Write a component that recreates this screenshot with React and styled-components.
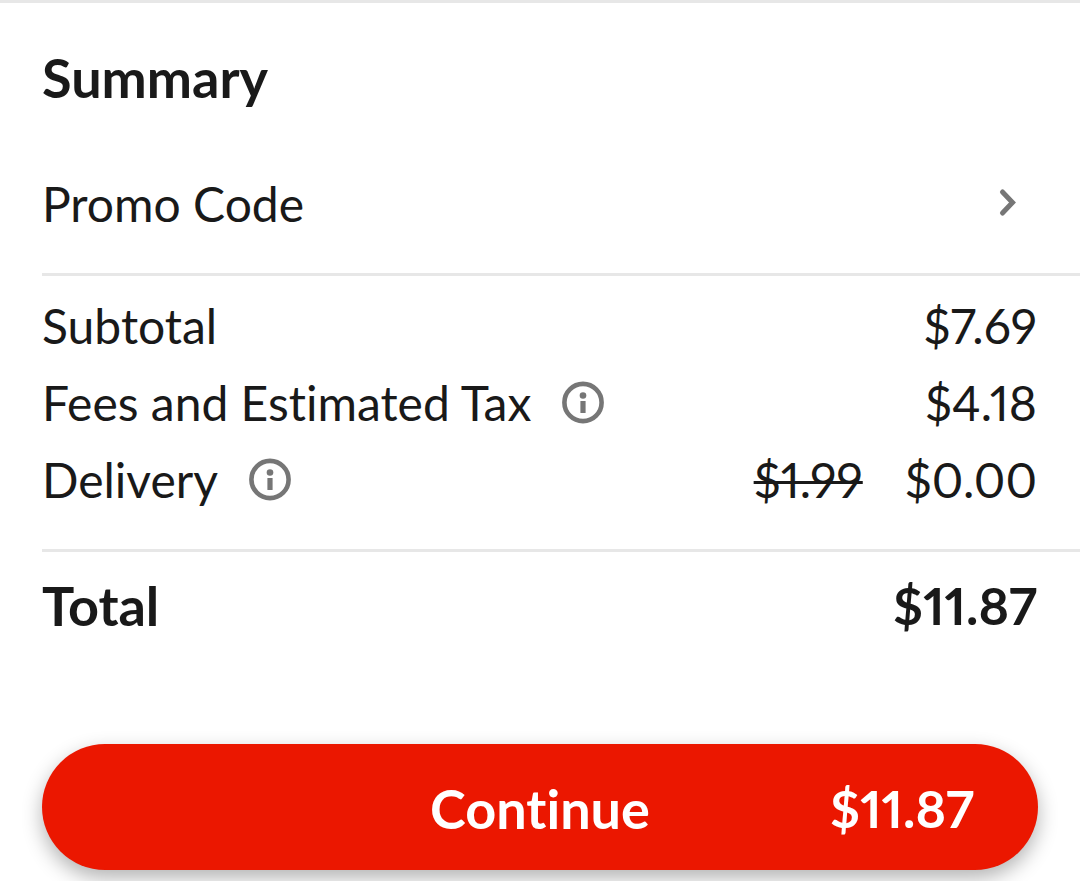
import React from 'react';
import { styled, createGlobalStyle } from 'styled-components';

const GlobalStyle = createGlobalStyle`
    * {
        box-sizing : border-box;
    }

    body {
        margin : 0;
        background-color : #ffffff;
        color : #191919;
        font-family : Lato, "Open Sans", sans-serif;
        font-size : 48px;
        font-weight : 400;
        font-variant-ligatures : none;
        font-variant-numeric : proportional-nums;
    }
`

const Page = styled.main`
    border-top : 3px solid #e7e7e7;
    overflow : hidden;
`

const Title = styled.h1`
    margin : 0;
    padding : 43px 42px 41px;
    font-size : 54px;
    font-weight : 700;
    line-height : 64px;
`

const PromoButton = styled.button`
    display : flex;
    width : 100%;
    justify-content : space-between;
    align-items : center;
    padding : 16px 62px 32px 42px;
    border : none;
    background : none;
    color : inherit;
    font : inherit;
    line-height : 74px;
    cursor : pointer;
`

const Section = styled.section`
    margin-left : 42px;
    padding : ${({ $padding }) => $padding};
    border-top : 3px solid #e7e7e7;
`

const Row = styled.div`
    display : flex;
    justify-content : space-between;
    align-items : center;
    font-size : ${({ $strong }) => ($strong ? '54px' : 'inherit')};
    font-weight : ${({ $strong }) => ($strong ? 700 : 400)};
    line-height : 77px;
`

const Label = styled.div`
    display : flex;
    align-items : center;
    gap : 30px;
`

const Amounts = styled.div`
    display : flex;
    gap : 42px;
    font-size : ${({ $strong }) => ($strong ? '52px' : 'inherit')};
`

const OldPrice = styled.s`
    text-decoration-thickness : 3px;
`

const InfoButton = styled.button`
    display : flex;
    padding : 0;
    border : none;
    background : none;
    color : #767676;
    cursor : pointer;
`

const Footer = styled.footer`
    padding : 90px 42px 12px;
`

const ContinueButton = styled.button`
    display : grid;
    grid-template-columns : 1fr auto 1fr;
    align-items : center;
    width : 100%;
    height : 126px;
    padding : 2px 64px 0;
    border : none;
    border-radius : 63px;
    background-color : #eb1700;
    box-shadow : 0 8px 20px rgba(0, 0, 0, .3);
    color : #ffffff;
    font : inherit;
    font-size : 54px;
    font-weight : 700;
    cursor : pointer;
`

const ButtonText = styled.span`
    grid-column : 2;
`

const ButtonPrice = styled.span`
    font-size : 52px;
    text-align : right;
`

const Info = ({ label }) => (
    <InfoButton type="button" aria-label={label}>
        <svg width="44" height="44" viewBox="0 0 44 44" fill="none">
            <circle cx="22" cy="21.5" r="18.6" stroke="currentColor" strokeWidth="4.6" />
            <circle cx="22" cy="14.5" r="3.3" fill="currentColor" />
            <rect x="19.4" y="20" width="5.2" height="12" rx=".5" fill="currentColor" />
        </svg>
    </InfoButton>
);

const App = () => {
    return (
        <Page>
            <GlobalStyle />
            <Title>Summary</Title>
            <PromoButton type="button">
                Promo Code
                <svg width="20" height="32" viewBox="0 0 20 32" fill="none">
                    <path d="M4.5 4L14.5 14.5L4.5 25" stroke="#767676" strokeWidth="5" strokeLinecap="round" />
                </svg>
            </PromoButton>

            <Section $padding="11px 43px 31px 0">
                <Row>
                    <Label>Subtotal</Label>
                    <Amounts>$7.69</Amounts>
                </Row>
                <Row>
                    <Label>Fees and Estimated Tax <Info label="About fees and estimated tax" /></Label>
                    <Amounts>$4.18</Amounts>
                </Row>
                <Row>
                    <Label>Delivery <Info label="About delivery" /></Label>
                    <Amounts>
                        <OldPrice>$1.99</OldPrice>
                        <span>$0.00</span>
                    </Amounts>
                </Row>
            </Section>

            <Section $padding="15px 43px 10px 0">
                <Row $strong>
                    <Label>Total</Label>
                    <Amounts $strong>$11.87</Amounts>
                </Row>
            </Section>

            <Footer>
                <ContinueButton type="button">
                    <ButtonText>Continue</ButtonText>
                    <ButtonPrice>$11.87</ButtonPrice>
                </ContinueButton>
            </Footer>
        </Page>
    );
};

export default App;
